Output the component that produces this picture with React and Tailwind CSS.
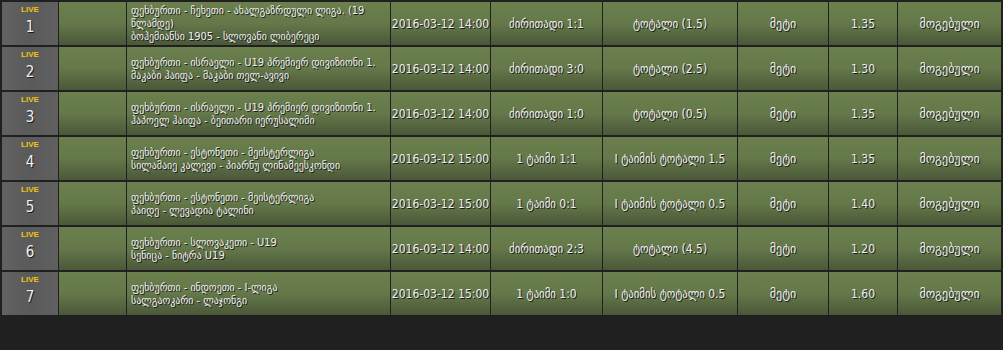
import React from "react";

const rows = [
  { n: 1, ev: ["ფეხბურთი - ჩეხეთი - ახალგაზრდული ლიგა. (19", "წლამდე)", "ბოჰემიანსი 1905 - სლოვანი ლიბერეცი"], date: "2016-03-12 14:00", market: "ძირითადი 1:1", sel: "ტოტალი (1.5)", odd: "1.35" },
  { n: 2, ev: ["ფეხბურთი - ისრაელი - U19 პრემიერ დივიზიონი 1.", "მაკაბი ჰაიფა - მაკაბი თელ-ავივი"], date: "2016-03-12 14:00", market: "ძირითადი 3:0", sel: "ტოტალი (2.5)", odd: "1.30" },
  { n: 3, ev: ["ფეხბურთი - ისრაელი - U19 პრემიერ დივიზიონი 1.", "ჰაპოელ ჰაიფა - ბეითარი იერუსალიმი"], date: "2016-03-12 14:00", market: "ძირითადი 1:0", sel: "ტოტალი (0.5)", odd: "1.35" },
  { n: 4, ev: ["ფეხბურთი - ესტონეთი - მეისტერლიგა", "სილამაიე კალევი - პიარნუ ლინამეესკონდი"], date: "2016-03-12 15:00", market: "1 ტაიმი 1:1", sel: "I ტაიმის ტოტალი 1.5", odd: "1.35" },
  { n: 5, ev: ["ფეხბურთი - ესტონეთი - მეისტერლიგა", "პაიდე - ლევადია ტალინი"], date: "2016-03-12 15:00", market: "1 ტაიმი 0:1", sel: "I ტაიმის ტოტალი 0.5", odd: "1.40" },
  { n: 6, ev: ["ფეხბურთი - სლოვაკეთი - U19", "სენიცა - ნიტრა U19"], date: "2016-03-12 14:00", market: "ძირითადი 2:3", sel: "ტოტალი (4.5)", odd: "1.20" },
  { n: 7, ev: ["ფეხბურთი - ინდოეთი - I-ლიგა", "სალგაოკარი - ლაჯონგი"], date: "2016-03-12 15:00", market: "1 ტაიმი 1:0", sel: "I ტაიმის ტოტალი 0.5", odd: "1.60" },
];

const green = "bg-gradient-to-b from-[#6b804d] via-[#647849] to-[#4b5839]";
const txt = "text-[#efefef] [text-shadow:1px_1px_0_#1b1b1b]";
const font = "[font-family:'DejaVu_Sans_Condensed','DejaVu_Sans',sans-serif]";
const wide = "[font-family:'DejaVu_Sans',sans-serif]";

function Cell({ children, className = "" }) {
  return (
    <div className={`${green} ${txt} flex items-center justify-center ${className}`}>{children}</div>
  );
}

export default function App() {
  return (
    <div className={`w-[1003px] h-[350px] bg-[#202020] pt-[2px] pl-[2px] ${font}`}>
      <div className="flex flex-col gap-[2px] w-[999px]">
        {rows.map((r) => (
          <div
            key={r.n}
            className="grid grid-cols-[56px_67px_263px_99px_111px_134px_90px_68px_103px] gap-[1px] h-[43px]"
          >
            <div className="bg-gradient-to-r from-[#626262] via-[#5a5a5a] to-[#606060] flex flex-col items-center pt-[3px]">
              <span className="text-[8px] leading-[9px] font-bold text-[#f2c311] [font-family:'Liberation_Sans',sans-serif]">LIVE</span>
              <span className={`text-[15px] leading-[18px] mt-[4px] ${txt}`}>{r.n}</span>
            </div>
            <div className={green}></div>
            <div className={`${green} ${txt} flex flex-col justify-center pl-[4px] text-[11px] leading-[13px] whitespace-nowrap overflow-hidden`}>
              {r.ev.map((l, i) => (
                <span key={i}>{l}</span>
              ))}
            </div>
            <Cell className="text-[12px]">{r.date}</Cell>
            <Cell className="text-[12px]">{r.market}</Cell>
            <Cell className="text-[12px]">{r.sel}</Cell>
            <Cell className={`text-[12px] ${wide}`}>მეტი</Cell>
            <Cell className="text-[12px]">{r.odd}</Cell>
            <Cell className={`text-[12px] ${wide}`}>მოგებული</Cell>
          </div>
        ))}
      </div>
    </div>
  );
}
